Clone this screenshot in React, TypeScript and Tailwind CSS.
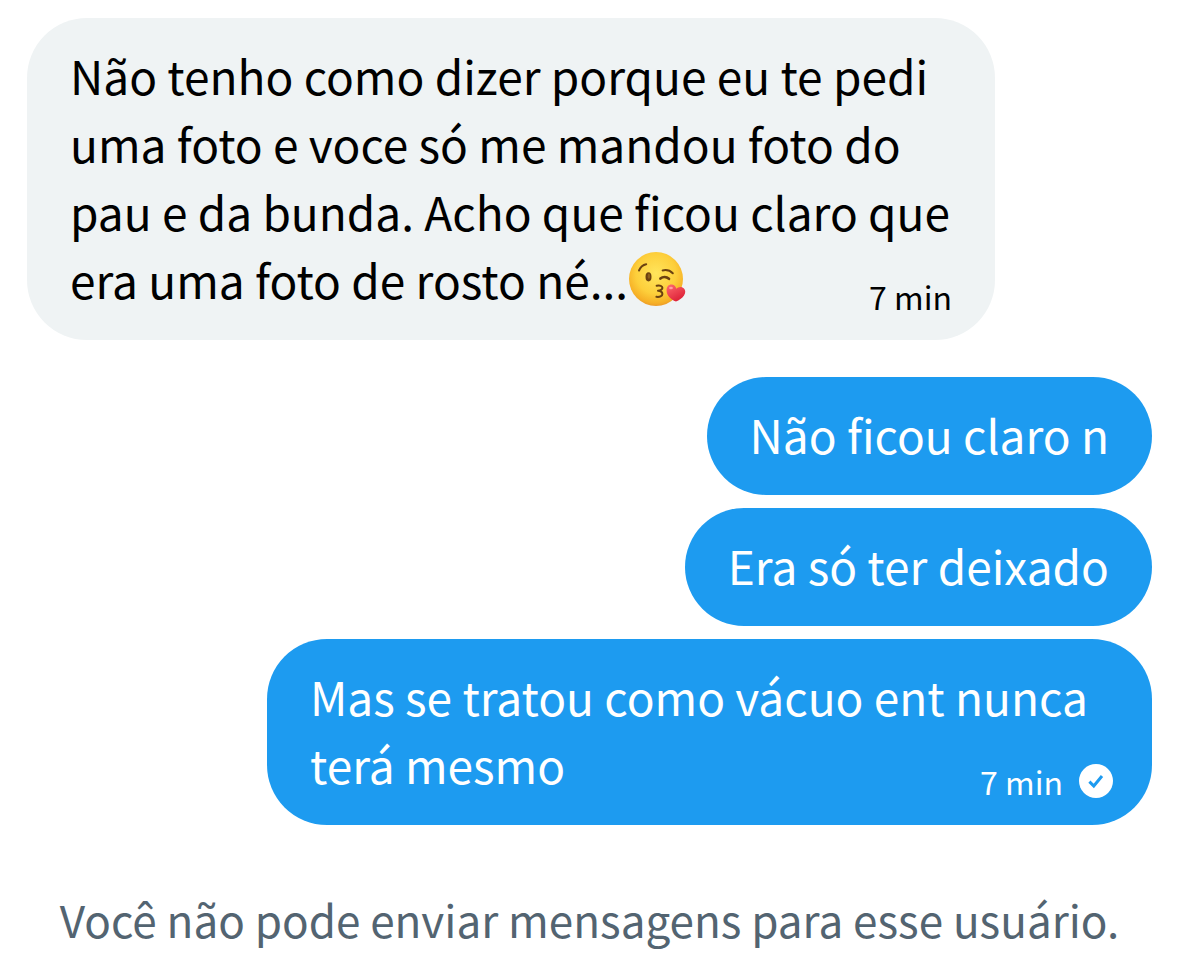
type Message = {
  id: number;
  lines: string[];
  mine: boolean;
  kiss?: boolean;
  time?: string;
  width: string;
};

const messages: Message[] = [
  {
    id: 1,
    lines: [
      "Não tenho como dizer porque eu te pedi",
      "uma foto e voce só me mandou foto do",
      "pau e da bunda. Acho que ficou claro que",
      "era uma foto de rosto né...",
    ],
    mine: false,
    kiss: true,
    time: "7 min",
    width: "w-full max-w-[968px]",
  },
  { id: 2, lines: ["Não ficou claro n"], mine: true, width: "max-w-full" },
  { id: 3, lines: ["Era só ter deixado"], mine: true, width: "max-w-full" },
  {
    id: 4,
    lines: ["Mas se tratou como vácuo ent nunca", "terá mesmo"],
    mine: true,
    time: "7 min",
    width: "w-full max-w-[885px]",
  },
];

const KissEmoji = () => (
  <svg
    viewBox="0 0 58 58"
    className="inline-block size-[58px] shrink-0"
    role="img"
    aria-label="Beijo"
  >
    <defs>
      <radialGradient id="face" cx="0.5" cy="0.4" r="0.62">
        <stop offset="0" stopColor="#ffe55c" />
        <stop offset="0.6" stopColor="#fdcf3b" />
        <stop offset="0.88" stopColor="#f6b026" />
        <stop offset="1" stopColor="#e9952a" />
      </radialGradient>
      <linearGradient id="heart" x1="0" y1="0" x2="0.6" y2="1">
        <stop offset="0" stopColor="#ff6b6f" />
        <stop offset="1" stopColor="#dc1f36" />
      </linearGradient>
    </defs>
    <circle cx="28" cy="29" r="27" fill="url(#face)" />
    <g fill="none" stroke="#6b4110" strokeLinecap="round" strokeLinejoin="round">
      <path d="M11 20.5c1.4-3.2 4-5.6 7.2-6.2" strokeWidth="2" />
      <path d="M34.6 20.4c3.6-.8 7.6.2 10.2 2.8" strokeWidth="2" />
      <path d="M32.4 28.6c2.4-2 6-2 8.6.2" strokeWidth="2.6" />
      <path
        d="M28.6 35.8c3.4-.8 5.8.2 5.8 2 0 1.6-1.9 2.6-4.4 3 2.7.3 4.4 1.4 4.4 3.2 0 2.2-2.8 3.3-6 2.8"
        strokeWidth="2"
      />
    </g>
    <ellipse cx="20.5" cy="26.8" rx="3" ry="4.6" fill="#6b4110" />
    <ellipse cx="20.9" cy="26.2" rx="1.2" ry="2.6" fill="#8d601c" />
    <path
      d="M48 51.6C42.4 49.2 38.6 45.4 38.6 40.2c-.2-3.9 2.7-6.3 5.6-5.6 2.3.5 3.6 2.1 4.1 4.2 1.6-1.6 3.9-2.5 6.2-1.4 3 1.3 3.6 4.9 1.5 8-1.9 2.7-4.9 4.7-8 6.2z"
      fill="url(#heart)"
    />
    <ellipse cx="43" cy="38" rx="1.9" ry="1.3" fill="#ff9da0" />
  </svg>
);

const CheckIcon = () => (
  <svg viewBox="0 0 34 34" className="size-[34px]" role="img" aria-label="Enviada">
    <circle cx="17" cy="17" r="17" fill="#fff" />
    <path d="M10.4 17.6l4.4 4.4 8.2-10" fill="none" stroke="#1d9bf0" strokeWidth="3" />
  </svg>
);

const Bubble = ({ message }: { message: Message }) => {
  const { lines, mine, kiss, time, width } = message;
  const last = lines.length - 1;

  return (
    <li
      className={`rounded-[60px] px-[43px] pt-[23px] pb-[27px] text-[46px] leading-[68px] ${width} ${
        mine ? "self-end bg-[#1d9bf0] text-white" : "mb-6 self-start bg-[#eff3f4] text-black"
      }`}
    >
      {lines.slice(0, last).map((line) => (
        <p key={line} className="whitespace-nowrap">
          {line}
        </p>
      ))}
      <div className="flex items-end justify-between">
        <p className="flex items-center whitespace-nowrap">
          {lines[last]}
          {kiss && <KissEmoji />}
        </p>
        {time && (
          <div className={`flex items-center gap-4 ${mine ? "-mr-1" : ""}`}>
            <time className="text-[32px] leading-[34px]">{time}</time>
            {mine && <CheckIcon />}
          </div>
        )}
      </div>
    </li>
  );
};

const App = () => {
  return (
    <main className="bg-white pt-[18px] pr-[26px] pl-[27px] font-['Noto_Sans_CJK_SC',sans-serif]">
      <ul className="flex flex-col gap-[13px]">
        {messages.map((message) => (
          <Bubble key={message.id} message={message} />
        ))}
      </ul>
      <p className="pt-[60px] pb-6 text-center text-[44px] leading-[68px] text-[#536471]">
        Você não pode enviar mensagens para esse usuário.
      </p>
    </main>
  );
};

export default App;
